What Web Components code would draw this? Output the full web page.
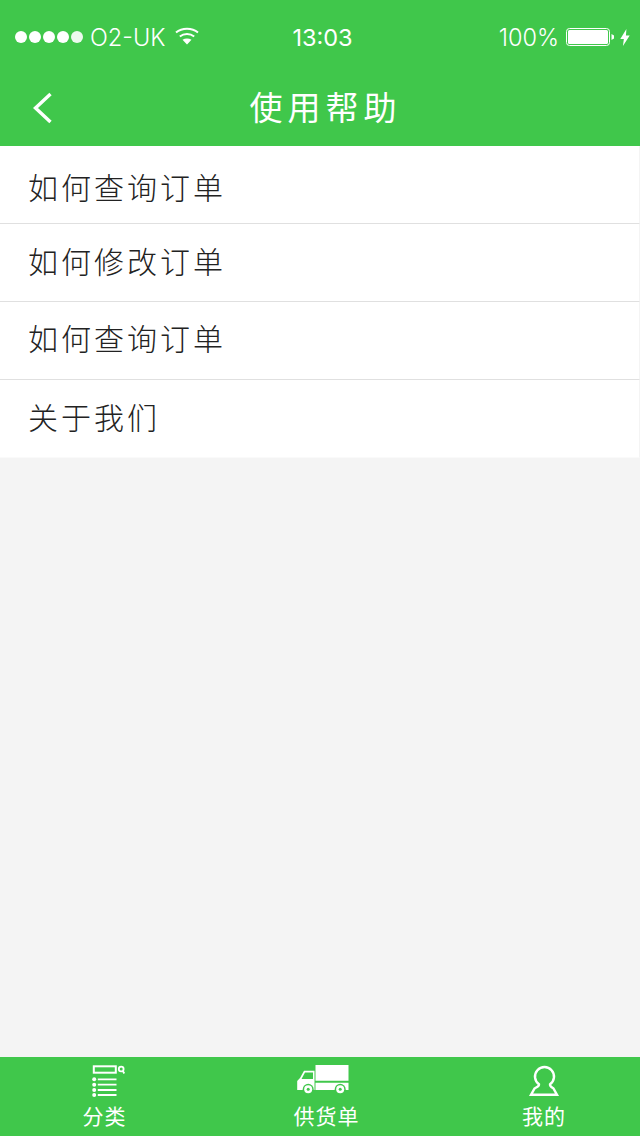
<!DOCTYPE html>
<html lang="zh">
<head>
<meta charset="utf-8">
<title>使用帮助</title>
<style>
    html, body { margin: 0; height: 100%; }
    body {
        background: #f4f4f4;
        font-family: "Noto Sans CJK SC", sans-serif;
    }
</style>
</head>
<body>
<help-page>
    <status-bar slot="top"></status-bar>
    <nav-bar slot="top">使用帮助</nav-bar>
    <help-item style="padding-top:2px">如何查询订单</help-item>
    <help-item style="padding-bottom:6px">如何修改订单</help-item>
    <help-item style="padding-bottom:8px">如何查询订单</help-item>
    <help-item style="padding-bottom:6px" last>关于我们</help-item>
    <tab-bar slot="bottom">
        <tab-item label="分类">
            <svg width="44" height="34" viewBox="0 0 44 34" fill="none" stroke="#fff" stroke-width="1.800">
                <rect x="10.800" y="2.300" width="22" height="6.400" stroke-width="2"/>
                <circle cx="38.200" cy="5" r="2.400"/>
                <path d="M39.800 7l1.500 2.500"/>
                <path d="M14.800 15.300h18.700M14.800 20.700h18.700M14.800 26h18.700M14.800 31h18.700"/>
                <g fill="#fff" stroke="none">
                    <circle cx="11.200" cy="15.300" r="2"/>
                    <circle cx="11.200" cy="20.700" r="2"/>
                    <circle cx="11.200" cy="26" r="2"/>
                    <circle cx="11.200" cy="31" r="2"/>
                </g>
            </svg>
        </tab-item>
        <tab-item label="供货单">
            <svg width="64" height="34" viewBox="0 0 64 34">
                <path fill="#fff" d="M20.500 1h33v15.700h-33zM20.500 18.700h33V26h-33z"/>
                <path fill="#fff" fill-rule="evenodd" d="M19.500 6.700H9L5 14l-2.800 3v9h17.300zM10 8.500h8V15H6.500z"/>
                <circle cx="13.200" cy="25.300" r="5.500" fill="#40c74b"/>
                <circle cx="13.200" cy="25.300" r="4" fill="#fff"/>
                <circle cx="13.200" cy="25.300" r="1.500" fill="#40c74b"/>
                <circle cx="45.200" cy="25.300" r="5.500" fill="#40c74b"/>
                <circle cx="45.200" cy="25.300" r="4" fill="#fff"/>
                <circle cx="45.200" cy="25.300" r="1.500" fill="#40c74b"/>
            </svg>
        </tab-item>
        <tab-item label="我的" style="padding-left:4px">
            <svg width="34" height="34" viewBox="0 0 34 34" fill="none" stroke="#fff" stroke-width="2.400">
                <path d="M12 20.300A9.500 9.500 0 1 1 23 20.300C22.800 22.500 25 23.500 26.500 24.500L30 30.800H4L7.500 24.500C9 23.500 12.200 22.500 12 20.300z"/>
            </svg>
        </tab-item>
    </tab-bar>
</help-page>

<script>
class HelpPage extends HTMLElement {
    constructor() {
        super()
        this.attachShadow({ mode: "open" })
        this.shadowRoot.innerHTML = `
        <style>
            :host { display: flex; flex-direction: column; height: 1136px; background: #f4f4f4; }
            .top { display: block; background: #40c74b; }
            .list { flex: 1; display: block; }
            .bottom { display: block; }
        </style>
        <div class="top"><slot name="top"></slot></div>
        <div class="list"><slot></slot></div>
        <div class="bottom"><slot name="bottom"></slot></div>
        `
    }
}

class StatusBar extends HTMLElement {
    constructor() {
        super()
        this.attachShadow({ mode: "open" })
        this.shadowRoot.innerHTML = `
        <style>
            :host {
                display: grid;
                grid-template-columns: 1fr auto 1fr;
                align-items: center;
                height: 74px;
                padding: 0 10px 0 15px;
                box-sizing: border-box;
                color: #fff;
                font: 300 23.500px Inter, "Liberation Sans", sans-serif;
            }
            .left, .right { display: flex; align-items: center; }
            .right { justify-content: flex-end; }
            .dots { display: flex; gap: 2px; margin-right: 7px; }
            .dots i { width: 12px; height: 12px; border-radius: 50%; background: #fff; }
            .dots i:last-child { opacity: .9; }
            .wifi { margin-left: 10px; margin-top: -2px; }
            .time { font-weight: 400; }
            .pct { margin-right: 7px; }
            .batt { margin-right: 5px; }
        </style>
        <div class="left">
            <div class="dots"><i></i><i></i><i></i><i></i><i></i></div>
            <span>O2-UK</span>
            <svg class="wifi" width="24" height="18" viewBox="0 0 24 18" fill="none" stroke="#fff" stroke-width="2">
                <path d="M1 5.500C7 .5 17 .5 23 5.500M4.800 9.500c4.200-3.300 10.200-3.300 14.400 0"/>
                <path fill="#fff" stroke="none" d="M12 17.500L7.500 12.800c2.600-1.700 6.400-1.700 9 0z"/>
            </svg>
        </div>
        <div class="time">13:03</div>
        <div class="right">
            <span class="pct">100%</span>
            <svg class="batt" width="49" height="18" viewBox="0 0 49 18">
                <rect x=".5" y=".5" width="43" height="17" rx="3" fill="none" stroke="#fff"/>
                <rect x="2" y="2" width="40" height="14" rx="1.500" fill="#fff"/>
                <path fill="#fff" d="M45.500 6l2.500 1.500v3L45.500 12z"/>
            </svg>
            <svg width="10" height="17" viewBox="0 0 10 18"><path fill="#fff" d="M6.500 0L0 10.500h3.800L2.800 18 10 6.800H6z"/></svg>
        </div>
        `
    }
}

class NavBar extends HTMLElement {
    constructor() {
        super()
        this.attachShadow({ mode: "open" })
        this.shadowRoot.innerHTML = `
        <style>
            :host {
                display: grid;
                grid-template-columns: 100px 1fr 100px;
                align-items: center;
                height: 72px;
                padding-bottom: 8px;
                box-sizing: border-box;
                color: #fff;
                font: 400 33px "Noto Sans CJK SC", sans-serif;
                letter-spacing: 5px;
            }
            .back { padding: 4px 0 0 32px; display: flex; }
            .title { text-align: center; padding-left: 11px; }
        </style>
        <div class="back">
            <svg width="22" height="34" viewBox="0 0 22 34" fill="none" stroke="#fff" stroke-width="3.400">
                <path d="M18.500 3L3.500 17l15 14"/>
            </svg>
        </div>
        <div class="title"><slot></slot></div>
        `
    }
}

class HelpItem extends HTMLElement {
    constructor() {
        super()
        this.attachShadow({ mode: "open" })
        this.shadowRoot.innerHTML = `
        <style>
            :host {
                display: flex;
                align-items: center;
                height: 78px;
                box-sizing: border-box;
                padding-left: 28px;
                background: #fff;
                border-bottom: 1px solid #e0e0e0;
                border-right: 1px solid #f4f4f4;
                color: #222;
                font: 300 30px "Noto Sans CJK SC", sans-serif;
                letter-spacing: 3px;
            }
            :host([last]) { border-bottom-color: #fafafa; }
        </style>
        <slot></slot>
        `
    }
}

class TabBar extends HTMLElement {
    constructor() {
        super()
        this.attachShadow({ mode: "open" })
        this.shadowRoot.innerHTML = `
        <style>
            :host {
                display: grid;
                grid-template-columns: 209px 235px 1fr;
                height: 79px;
                background: #40c74b;
            }
        </style>
        <slot></slot>
        `
    }
}

class TabItem extends HTMLElement {
    constructor() {
        super()
        this.attachShadow({ mode: "open" })
        this.shadowRoot.innerHTML = `
        <style>
            :host {
                display: flex;
                flex-direction: column;
                align-items: center;
                padding-top: 7px;
                box-sizing: border-box;
                color: #fff;
                font: 400 21px/26px "Noto Sans CJK SC", sans-serif;
                letter-spacing: 1px;
            }
            .icon { height: 34px; margin-bottom: 4px; display: flex; }
        </style>
        <div class="icon"><slot></slot></div>
        <div>${this.getAttribute('label')}</div>
        `
    }
}

customElements.define("help-page", HelpPage)
customElements.define("status-bar", StatusBar)
customElements.define("nav-bar", NavBar)
customElements.define("help-item", HelpItem)
customElements.define("tab-bar", TabBar)
customElements.define("tab-item", TabItem)
</script>
</body>
</html>
